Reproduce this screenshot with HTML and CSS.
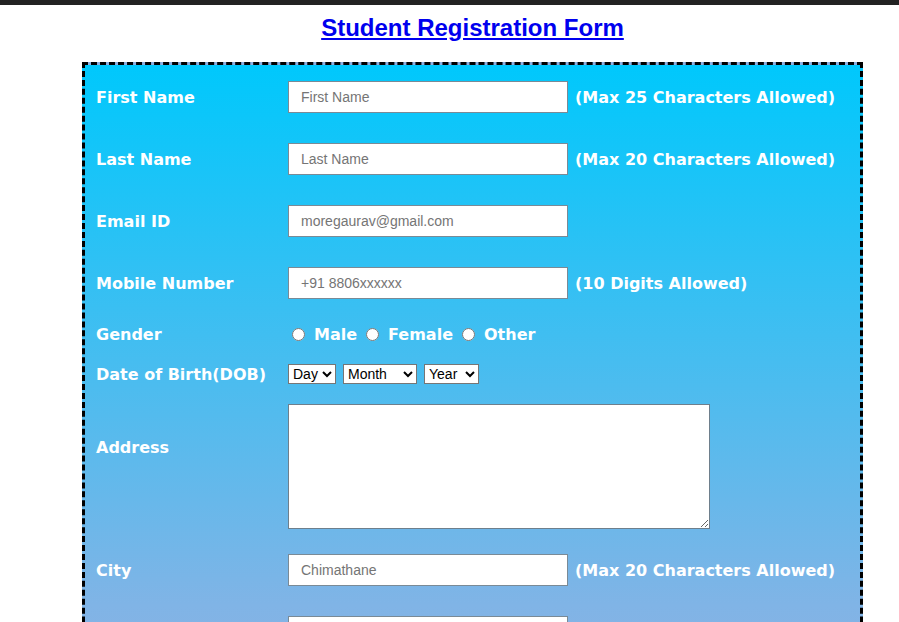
FILE: index.html
```html
<!DOCTYPE html>
<html>
<head>
<meta charset="utf-8">
<title>Student Registration Form</title>
<link rel="stylesheet" href="styles.css">
</head>
<body>
<div class="topbar"></div>
<div class="container">
  <h1 class="title"><a href="#">Student Registration Form</a></h1>
  <form class="form">
    <div class="row text-row">
      <label class="label">First Name</label>
      <input class="field" type="text" placeholder="First Name">
      <span class="hint">(Max 25 Characters Allowed)</span>
    </div>
    <div class="row text-row">
      <label class="label">Last Name</label>
      <input class="field" type="text" placeholder="Last Name">
      <span class="hint">(Max 20 Characters Allowed)</span>
    </div>
    <div class="row text-row">
      <label class="label">Email ID</label>
      <input class="field" type="text" placeholder="moregaurav@gmail.com">
      <span class="hint"></span>
    </div>
    <div class="row text-row">
      <label class="label">Mobile Number</label>
      <input class="field" type="text" placeholder="+91 8806xxxxxx">
      <span class="hint">(10 Digits Allowed)</span>
    </div>
    <div class="row gender-row">
      <label class="label">Gender</label>
      <div class="radios">
        <input type="radio" name="g"><span class="opt">Male</span>
        <input type="radio" name="g"><span class="opt">Female</span>
        <input type="radio" name="g"><span class="opt">Other</span>
      </div>
    </div>
    <div class="row dob-row">
      <label class="label">Date of Birth(DOB)</label>
      <div class="selects">
        <select class="sel sel-day"><option>Day</option></select>
        <select class="sel sel-month"><option>Month</option></select>
        <select class="sel sel-year"><option>Year</option></select>
      </div>
    </div>
    <div class="row addr-row">
      <label class="label addr-label">Address</label>
      <textarea class="area"></textarea>
    </div>
    <div class="row text-row">
      <label class="label">City</label>
      <input class="field" type="text" placeholder="Chimathane">
      <span class="hint">(Max 20 Characters Allowed)</span>
    </div>
    <div class="row text-row">
      <label class="label"></label>
      <input class="field" type="text">
      <span class="hint"></span>
    </div>
  </form>
</div>
</body>
</html>
```
FILE: styles.css
```css
html, body {
  margin: 0;
  padding: 0;
  background: #ffffff;
}
.topbar {
  height: 5px;
  background: #222222;
}
.container {
  width: 781px;
  margin-left: 82px;
}
.title {
  margin: 0;
  padding-top: 10px;
  height: 47px;
  text-align: center;
  font-family: "Liberation Sans", Arial, sans-serif;
  font-size: 24px;
  font-weight: bold;
  line-height: 26px;
}
.title a {
  color: #0000ee;
  text-decoration: underline;
}
.form {
  box-sizing: border-box;
  border: 3px dashed #000000;
  padding: 16px 11px 40px 11px;
  background: linear-gradient(180deg, #00c8fc 0px, #80b4e6 540px, #95aee0 700px);
  font-family: "DejaVu Sans", Verdana, sans-serif;
  font-weight: bold;
  font-size: 16px;
  color: #ffffff;
}
.row {
  display: grid;
  grid-template-columns: 192px auto 1fr;
  align-items: center;
}
.text-row {
  height: 32px;
  margin-bottom: 30px;
}
.field {
  box-sizing: border-box;
  width: 280px;
  height: 32px;
  border: 1px solid #7a8a96;
  padding: 0 12px;
  font-family: "Liberation Sans", Arial, sans-serif;
  font-size: 14px;
  color: #444;
  background: #fff;
  outline: none;
}
.field::placeholder {
  color: #757575;
}
.hint {
  padding-left: 7px;
  white-space: nowrap;
}
.gender-row {
  height: 20px;
  margin-top: -5px;
  margin-bottom: 20px;
}
.radios {
  display: flex;
  align-items: center;
  grid-column: 2 / 4;
}
.radios input {
  margin: 0 9px 0 4px;
  width: 13px;
  height: 13px;
}
.opt {
  margin-right: 5px;
}
.dob-row {
  height: 20px;
  margin-bottom: 20px;
}
.selects {
  display: flex;
  gap: 7px;
  grid-column: 2 / 4;
}
.sel {
  height: 20px;
  font-family: "Liberation Sans", Arial, sans-serif;
  font-size: 14px;
  border: 1px solid #767676;
  background: #fff;
  color: #000;
  padding: 0;
}
.sel-day { width: 48px; }
.sel-month { width: 74px; }
.sel-year { width: 55px; }
.addr-row {
  height: 125px;
  margin-bottom: 25px;
}
.addr-label {
  align-self: start;
  padding-top: 34px;
}
.area {
  box-sizing: border-box;
  width: 422px;
  height: 125px;
  border: 1px solid #6e7f8c;
  grid-column: 2 / 4;
  resize: both;
}
```
